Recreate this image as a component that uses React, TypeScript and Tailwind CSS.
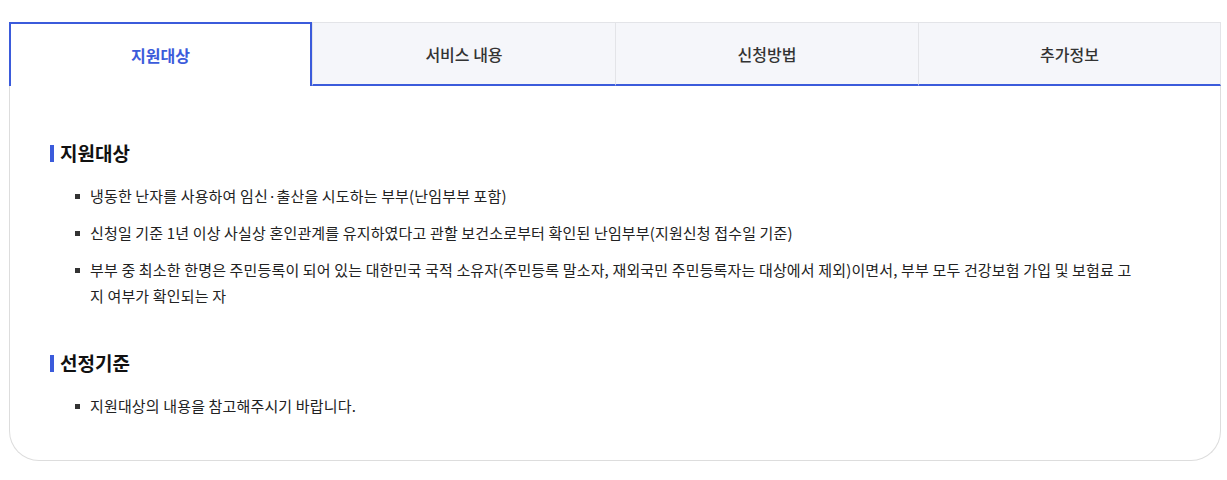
import { useState } from "react";

const tabs = ["지원대상", "서비스 내용", "신청방법", "추가정보"];

const sections = [
  {
    title: "지원대상",
    items: [
      "냉동한 난자를 사용하여 임신·출산을 시도하는 부부(난임부부 포함)",
      "신청일 기준 1년 이상 사실상 혼인관계를 유지하였다고 관할 보건소로부터 확인된 난임부부(지원신청 접수일 기준)",
      "부부 중 최소한 한명은 주민등록이 되어 있는 대한민국 국적 소유자(주민등록 말소자, 재외국민 주민등록자는 대상에서 제외)이면서, 부부 모두 건강보험 가입 및 보험료 고지 여부가 확인되는 자",
    ],
  },
  {
    title: "선정기준",
    items: ["지원대상의 내용을 참고해주시기 바랍니다."],
  },
];

export default function App() {
  const [active, setActive] = useState(0);

  return (
    <div
      className="w-full h-[480px] bg-white pt-[22px] px-[9px]"
      style={{ fontFamily: '"Noto Sans CJK KR", "Noto Sans", sans-serif' }}
    >
      <div className="w-[1212px]">
        <div className="flex">
          {tabs.map((tab, i) =>
            i === active ? (
              <button
                key={tab}
                onClick={() => setActive(i)}
                className="w-[303px] h-[64px] border-2 border-b-0 border-[#3b5bdb] bg-white text-[16px] font-bold text-[#3b5bdb]"
              >
                {tab}
              </button>
            ) : (
              <button
                key={tab}
                onClick={() => setActive(i)}
                className="w-[303px] h-[64px] border-t border-l border-[#e3e4e8] border-b-2 border-b-[#3b5bdb] bg-[#f5f6fa] text-[16px] font-medium text-[#333333] last:border-r"
              >
                {tab}
              </button>
            )
          )}
        </div>

        <div className="border border-t-0 border-[#dddddd] rounded-b-[30px] pl-[40px] pr-[78px] pt-[54px] pb-[41px]">
          {sections.map((s, si) => (
            <div key={s.title} className={si > 0 ? "mt-[41px]" : ""}>
              <h3 className="flex items-center text-[19px] font-bold text-[#111111] leading-[26px]">
                <span className="w-[4px] h-[17px] bg-[#3b5bdb] mr-[6px]" />
                {s.title}
              </h3>
              <ul className="mt-[17px] flex flex-col gap-[11px] pl-[25px]">
                {s.items.map((it) => (
                  <li
                    key={it}
                    className="relative pl-[15px] text-[15px] leading-[26px] tracking-[0.15px] text-[#222222]"
                  >
                    <span className="absolute left-0 top-[11px] w-[5px] h-[5px] bg-[#333333]" />
                    {it}
                  </li>
                ))}
              </ul>
            </div>
          ))}
        </div>
      </div>
    </div>
  );
}
